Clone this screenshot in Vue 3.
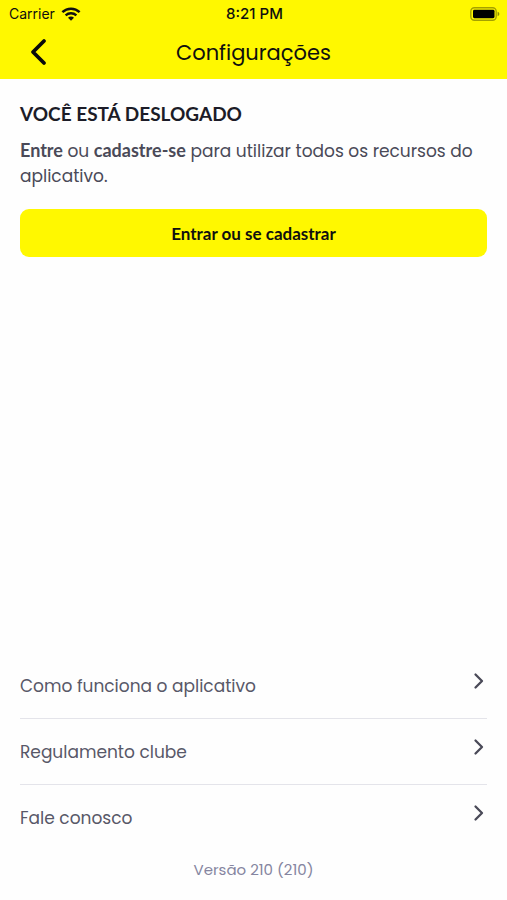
<template>
  <div class="screen">
    <header class="header">
      <div class="status-bar">
        <div class="carrier">
          <span>Carrier</span>
          <svg width="20" height="14" viewBox="0 0 20 14" fill="none" aria-hidden="true">
            <path d="M1.4 5.2C6.2 .6 13.8 .6 18.6 5.2" stroke="#111" stroke-width="2.5" />
            <path d="M4.6 8.4C7.7 5.5 12.3 5.5 15.4 8.4" stroke="#111" stroke-width="2.3" />
            <path d="M10 13.8L7 10.8C8.7 9.2 11.3 9.2 13 10.8Z" fill="#111" />
          </svg>
        </div>
        <span class="time">8:21 PM</span>
        <svg class="battery" width="30" height="14" viewBox="0 0 30 14" aria-hidden="true">
          <rect x=".8" y=".8" width="25.4" height="12.4" rx="3.6" fill="none" stroke="#a5a100" stroke-width="1.4" />
          <rect x="3" y="2.8" width="21.5" height="8.4" rx="1.4" fill="#000" />
          <path d="M27.6 4.8C29.9 5.5 29.9 8.5 27.6 9.2Z" fill="#8f8c00" />
        </svg>
      </div>
      <div class="nav-bar">
        <button class="back" type="button" aria-label="Voltar">
          <svg width="18" height="28" viewBox="0 0 18 28" fill="none" aria-hidden="true">
            <path d="M15 3L4 14L15 25" stroke="#0a0a0a" stroke-width="3.8" stroke-linecap="round" stroke-linejoin="round" />
          </svg>
        </button>
        <h1>Configurações</h1>
      </div>
    </header>

    <main class="content">
      <section class="login">
        <h2>VOCÊ ESTÁ DESLOGADO</h2>
        <p>
          <strong>Entre</strong> ou <strong>cadastre-se</strong> para utilizar todos os recursos do aplicativo.
        </p>
        <button class="login-button" type="button">Entrar ou se cadastrar</button>
      </section>

      <nav class="menu">
        <a v-for="item in items" :key="item" class="menu-item" href="#">
          <span>{{ item }}</span>
          <svg width="12" height="18" viewBox="0 0 12 18" fill="none" aria-hidden="true">
            <path d="M2.5 2.5L9 9L2.5 15.5" stroke="#4a4a58" stroke-width="2.3" stroke-linecap="round" stroke-linejoin="round" />
          </svg>
        </a>
      </nav>
    </main>

    <footer class="version">Versão 210 (210)</footer>
  </div>
</template>

<script setup>
const items = ['Como funciona o aplicativo', 'Regulamento clube', 'Fale conosco']
</script>

<style>
body {
  background: #fefefe;
}
</style>

<style scoped>
.screen {
  box-sizing: border-box;
  display: flex;
  flex-direction: column;
  min-height: 100vh;
  padding-bottom: 18px;
  font-family: Poppins, Inter, sans-serif;
}

.header {
  background: #fff800;
  color: #0f0f0f;
}

.status-bar {
  display: grid;
  grid-template-columns: 1fr auto 1fr;
  align-items: center;
  height: 27px;
  padding: 0 7px 0 9px;
  font-family: Inter, sans-serif;
  font-size: 14px;
}

.carrier {
  display: flex;
  align-items: center;
  gap: 6px;
}

.time {
  font-size: 15px;
  font-weight: 500;
}

.battery {
  justify-self: end;
}

.nav-bar {
  display: grid;
  grid-template-columns: 60px 1fr 60px;
  align-items: center;
  height: 50px;
  padding-bottom: 2px;
}

.back {
  display: flex;
  justify-content: flex-end;
  padding: 0 13px 0 0;
  border: 0;
  background: none;
  cursor: pointer;
}

h1 {
  margin: 0;
  font-size: 21px;
  font-weight: 400;
  text-align: center;
}

.content {
  display: flex;
  flex: 1;
  flex-direction: column;
  justify-content: space-between;
  padding: 0 20px;
}

.login {
  padding-top: 22px;
}

h2 {
  margin: 0 0 12px;
  font-family: Lato, sans-serif;
  font-size: 19px;
  font-weight: 700;
  line-height: 26px;
  color: #1c1c28;
}

p {
  margin: 0 0 20px;
  font-size: 17px;
  line-height: 25px;
  color: #4a4a58;
}

strong {
  font-family: Lato, sans-serif;
  font-size: 18px;
  font-weight: 700;
  line-height: 20px;
}

.login-button {
  display: block;
  width: 100%;
  height: 48px;
  border: 0;
  border-radius: 9px;
  background: #fff800;
  color: #0f0f0f;
  font-family: Lato, sans-serif;
  font-size: 17px;
  font-weight: 700;
  cursor: pointer;
}

.menu-item {
  display: flex;
  align-items: flex-start;
  justify-content: space-between;
  padding: 19px 2px 17px 0;
  font-size: 17px;
  line-height: 29px;
  color: #585868;
  text-decoration: none;
}

.menu-item + .menu-item {
  border-top: 1px solid #e4e4ea;
}

.version {
  margin-top: 8px;
  font-size: 15px;
  line-height: 24px;
  text-align: center;
  color: #8585a0;
}
</style>
